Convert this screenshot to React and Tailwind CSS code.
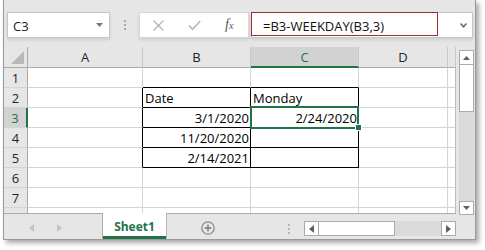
import React from 'react';

const DATA = {
  '2-1': { t: 'Date', left: true },
  '2-2': { t: 'Monday', left: true },
  '3-1': { t: '3/1/2020' },
  '3-2': { t: '2/24/2020' },
  '4-1': { t: '11/20/2020' },
  '5-1': { t: '2/14/2021' },
};

function TriDown({ color = '#6b6b6b' }) {
  return (
    <svg width="7" height="4" viewBox="0 0 7 4"><path d="M0 0H7L3.5 4Z" fill={color} /></svg>
  );
}
function TriUp({ color = '#6b6b6b' }) {
  return (
    <svg width="7" height="4" viewBox="0 0 7 4"><path d="M0 4H7L3.5 0Z" fill={color} /></svg>
  );
}
function TriLeft({ color = '#6b6b6b' }) {
  return (
    <svg width="5" height="8" viewBox="0 0 5 8"><path d="M5 0V8L0 4Z" fill={color} /></svg>
  );
}
function TriRight({ color = '#6b6b6b' }) {
  return (
    <svg width="5" height="8" viewBox="0 0 5 8"><path d="M0 0V8L5 4Z" fill={color} /></svg>
  );
}

function DataCell({ r, c }) {
  const partial = r === 8;
  const rightBlack = c <= 2 && r >= 2 && r <= 5;
  const bottomBlack = (c === 1 || c === 2) && r >= 1 && r <= 5;
  const blue = r === 2 && (c === 1 || c === 2);
  const d = DATA[`${r}-${c}`];
  const selected = r === 3 && c === 2;
  return (
    <div
      className={[
        'relative border-r overflow-visible bg-white',
        partial ? 'border-b-0' : 'border-b',
        rightBlack ? 'border-r-black' : c === 4 ? 'border-r-[#bcbcbc]' : 'border-r-[#d4d4d4]',
        bottomBlack ? 'border-b-black' : 'border-b-[#d4d4d4]',
        blue ? 'bg-[#ddebf7]' : '',
      ].join(' ')}
    >
      {d && (
        <span
          className={
            d.left
              ? 'block whitespace-nowrap text-[13px] leading-[18px] pt-[1px] pl-[2px] text-left text-black'
              : 'block whitespace-nowrap text-[13px] leading-[18px] pt-[1px] pr-[1px] text-right text-black'
          }
        >
          {d.t}
        </span>
      )}
      {selected && (
        <>
          <div className="absolute left-[-1px] top-[-2px] w-[109px] h-[23px] border-2 border-[#217346] z-10 pointer-events-none" />
          <div className="absolute left-[104px] top-[16px] w-[7px] h-[7px] bg-[#217346] border border-white z-20" />
        </>
      )}
    </div>
  );
}

export default function App() {
  const rows = [1, 2, 3, 4, 5, 6, 7, 8];
  const cols = [0, 1, 2, 3, 4];
  const letters = ['A', 'B', 'C', 'D', ''];

  return (
    <div className="w-[485px] h-[250px] bg-white overflow-hidden font-['Open_Sans',sans-serif]">
      <div className="ml-[3px] w-[473px] h-[240px] bg-[#e6e6e6] border-l border-r border-b border-[#9a9a9a] shadow-[3px_3px_5px_rgba(0,0,0,0.35)] flex flex-col">
        {/* Formula bar */}
        <div className="h-[47px] shrink-0 flex items-start pt-[12px]">
          <div className="ml-[3px] w-[103px] h-[26px] bg-white border border-[#c6c6c6] flex items-center justify-between pl-[5px] pr-[6px] shadow-[0_2px_3px_rgba(0,0,0,0.10)]">
            <span className="text-[13px] leading-[24px] pt-[1px] text-[#222]">C3</span>
            <TriDown color="#777" />
          </div>
          <div className="ml-[14px] mt-[8px] flex flex-col gap-[2px]">
            <div className="w-[2px] h-[2px] bg-[#a8a8a8]" />
            <div className="w-[2px] h-[2px] bg-[#a8a8a8]" />
            <div className="w-[2px] h-[2px] bg-[#a8a8a8]" />
          </div>
          <div className="ml-[13px] w-[110px] h-[26px] bg-white border border-[#d6d6d6] flex items-center pl-[13px] shadow-[0_2px_3px_rgba(0,0,0,0.10)]">
            <svg width="11" height="11" viewBox="0 0 11 11">
              <path d="M0.5 0.5L10.5 10.5M10.5 0.5L0.5 10.5" stroke="#b3b3b3" strokeWidth="1.2" />
            </svg>
            <svg className="ml-[24px]" width="13" height="11" viewBox="0 0 13 11">
              <path d="M1 5.5L4.6 9.3L12.2 1" stroke="#b8b8b8" strokeWidth="1.7" fill="none" />
            </svg>
            <span className="ml-[24px] font-['Liberation_Serif',serif] italic text-[14px] leading-[20px] text-[#555]">
              f<span className="text-[10px]">x</span>
            </span>
          </div>
          <div className="relative ml-[2px] w-[222px] h-[26px] bg-white border border-[#c6c6c6] flex items-center justify-between pl-[11px] pr-[5px] shadow-[0_2px_3px_rgba(0,0,0,0.10)]">
            <div className="absolute left-[-1px] top-[-1px] w-[187px] h-[24px] border border-[#a52a2a]" />
            <span className="text-[13px] leading-[24px] pt-[1px] text-[#111] whitespace-nowrap">=B3-WEEKDAY(B3,3)</span>
            <svg width="7" height="5" viewBox="0 0 7 5">
              <path d="M0.6 0.6L3.5 3.8L6.4 0.6" stroke="#666" strokeWidth="1.5" fill="none" />
            </svg>
          </div>
        </div>

        {/* Body */}
        <div className="flex flex-1">
          <div className="w-[452px] flex flex-col">
            <div className="grid grid-cols-[24px_115px_108px_108px_89px_8px] grid-rows-[21px_repeat(7,20px)_5px] h-[166px]">
              {/* header row */}
              <div className="relative border-r border-b border-[#ababab] bg-[#e6e6e6]">
                <svg className="absolute left-0 top-0" width="23" height="20" viewBox="0 0 23 20">
                  <path d="M20 4V17H7Z" fill="#b9b9b9" />
                </svg>
              </div>
              {cols.map((c) => (
                <div
                  key={'h' + c}
                  className={
                    c === 2
                      ? 'border-r border-r-[#c8c8c8] border-b-2 border-b-[#217346] bg-[#d2d2d2] text-center text-[13px] leading-[19px] pt-[1px] text-[#217346]'
                      : 'border-r border-r-[#c8c8c8] border-b border-b-[#ababab] bg-[#e6e6e6] text-center text-[13px] leading-[19px] pt-[1px] text-[#262626]'
                  }
                >
                  {letters[c]}
                </div>
              ))}
              {rows.map((r) => (
                <React.Fragment key={'r' + r}>
                  <div
                    className={
                      r === 3
                        ? 'border-r-2 border-r-[#217346] border-b border-b-[#d4d4d4] bg-[#d2d2d2] text-center text-[13px] leading-[18px] pt-[1px] text-[#217346]'
                        : r === 8
                        ? 'border-r border-r-[#ababab] bg-[#e6e6e6]'
                        : 'border-r border-r-[#ababab] border-b border-b-[#d4d4d4] bg-[#e6e6e6] text-center text-[13px] leading-[18px] pt-[1px] text-[#262626]'
                    }
                  >
                    {r <= 7 ? r : ''}
                  </div>
                  {cols.map((c) => (
                    <DataCell key={r + '-' + c} r={r} c={c} />
                  ))}
                </React.Fragment>
              ))}
            </div>

            {/* Tab bar */}
            <div className="h-[26px] flex">
              <div className="w-[99px] border-t border-r border-[#ababab] flex items-start pt-[10px]">
                <span className="ml-[25px]"><TriLeft color="#c4c4c4" /></span>
                <span className="ml-[23px]"><TriRight color="#c4c4c4" /></span>
              </div>
              <div className="w-[64px] bg-white border-r border-[#b4b4b4] flex flex-col">
                <div className="flex-1 text-center pt-[6px]">
                  <span className="block text-[12px] leading-[16px] font-bold text-[#217346]">Sheet1</span>
                </div>
                <div className="h-[3px] bg-[#217346]" />
              </div>
              <div className="flex-1 border-t border-[#ababab] flex items-start">
                <svg className="ml-[34px] mt-[7px]" width="14" height="14" viewBox="0 0 14 14">
                  <circle cx="7" cy="7" r="6.2" stroke="#8a8a8a" strokeWidth="1.3" fill="none" />
                  <path d="M7 3.6V10.4M3.6 7H10.4" stroke="#7a7a7a" strokeWidth="1.4" />
                </svg>
                <div className="ml-[73px] mt-[10px] flex flex-col gap-[2px]">
                  <div className="w-[2px] h-[2px] bg-[#b4b4b4]" />
                  <div className="w-[2px] h-[2px] bg-[#b4b4b4]" />
                  <div className="w-[2px] h-[2px] bg-[#b4b4b4]" />
                </div>
                <div className="ml-[14px] mt-[7px] flex-1 h-[15px] flex">
                  <div className="w-[15px] h-[15px] bg-white border border-[#ababab] flex items-center justify-center">
                    <TriLeft color="#606060" />
                  </div>
                  <div className="w-[76px] h-[15px] bg-white border border-l-0 border-[#ababab]" />
                  <div className="flex-1 h-[15px] bg-[#dadada]" />
                  <div className="w-[15px] h-[15px] bg-white border border-[#ababab] flex items-center justify-center">
                    <TriRight color="#606060" />
                  </div>
                </div>
              </div>
            </div>
          </div>

          {/* right gutter with vertical scrollbar */}
          <div className="flex-1 flex flex-col">
            <div className="ml-[3px] mt-[3px] w-[15px] h-[165px] flex flex-col">
              <div className="h-[15px] bg-white border border-[#ababab] flex items-center justify-center">
                <TriUp color="#606060" />
              </div>
              <div className="h-[47px] bg-white border border-t-0 border-[#ababab]" />
              <div className="flex-1 bg-[#dadada]" />
              <div className="h-[14px] bg-white border border-[#ababab] flex items-center justify-center">
                <TriDown color="#606060" />
              </div>
            </div>
          </div>
        </div>
      </div>
    </div>
  );
}
